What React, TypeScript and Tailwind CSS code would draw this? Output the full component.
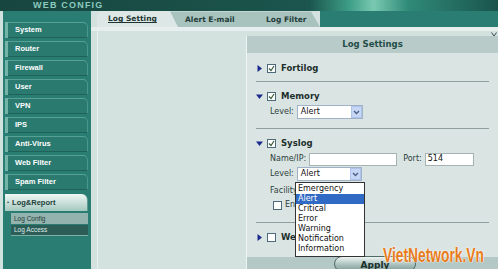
import React from 'react';

const menu = ['System', 'Router', 'Firewall', 'User', 'VPN', 'IPS', 'Anti-Virus', 'Web Filter', 'Spam Filter'];
const levels = ['Emergency', 'Alert', 'Critical', 'Error', 'Warning', 'Notification', 'Information'];

const Tri: React.FC<{ open?: boolean }> = ({ open }) => (
    <svg width="7" height="7" viewBox="0 0 7 7" className="shrink-0">
        {open ? <polygon points="0,1.5 7,1.5 3.5,6" fill="#1b2a8c" /> : <polygon points="1.5,0 6,3.5 1.5,7" fill="#1b2a8c" />}
    </svg>
);

const Check: React.FC<{ on?: boolean }> = ({ on }) => (
    <div className="w-[9px] h-[9px] shrink-0 bg-white border border-[#4d6a7c] flex items-center justify-center">
        {on && (
            <svg width="7" height="7" viewBox="0 0 7 7">
                <polyline points="1,3.5 3,5.5 6,1" fill="none" stroke="#3a5a3a" strokeWidth="1.2" />
            </svg>
        )}
    </div>
);

const Select: React.FC<{ w: string; value: string }> = ({ w, value }) => (
    <div className={`${w} h-[14px] bg-white border border-[#9fb2c8] flex items-center justify-between`}>
        <span className="pl-[3px] text-[8px] text-[#111]">{value}</span>
        <div className="w-[11px] h-[12px] bg-[#c6d6f5] border border-[#b0c3ea] flex items-center justify-center">
            <svg width="7" height="5" viewBox="0 0 7 5">
                <polyline points="1,1 3.5,3.5 6,1" fill="none" stroke="#4d6185" strokeWidth="1.4" />
            </svg>
        </div>
    </div>
);

const Sep = () => <div className="mx-[9px] h-px bg-[#8f9f9d] shrink-0" />;

const App: React.FC = () => {
    return (
        <div className="w-[498px] h-[269px] overflow-hidden relative flex flex-col bg-[#2a7d73] font-['DejaVu_Sans',sans-serif]">
            {/* top strip */}
            <div className="h-[11px] shrink-0 bg-[linear-gradient(90deg,#17463f_0%,#1b554d_62%,#3c9c86_70%,#79c9b0_75%,#2f8a78_82%,#1a544c_100%)]">
                <div className="pl-[33px] text-[9px] leading-[10px] font-bold tracking-[1.2px] text-[#8ccabf] font-['Liberation_Sans',sans-serif]">
                    WEB CONFIG
                </div>
            </div>

            <div className="flex flex-1">
                {/* sidebar */}
                <div className="w-[91px] flex shrink-0">
                    <div className="w-[3px] bg-[#cfe2dd]" />
                    <div className="flex-1 flex flex-col pt-[11px] pl-[2px] pr-[3px] gap-[3px] font-['Liberation_Sans',sans-serif]">
                        {menu.map((m) => (
                            <div key={m} className="h-[16px] flex">
                                <div className="w-[3px] bg-[#74b3a8]" />
                                <div className="flex-1 flex items-center pl-[7px] bg-[#2a7a70] border-t border-r border-b border-t-[#56a095] border-r-[#4a978c] border-b-[#1f6259] rounded-tr-[5px] text-white text-[7.5px] font-bold">
                                    {m}
                                </div>
                            </div>
                        ))}
                        <div className="h-[17px] mt-[1px] flex items-center bg-[linear-gradient(180deg,#eef7f3,#a6c9c0)] rounded-tr-[6px] border-r border-[#5f9b91]">
                            <span className="pl-[2px] pr-[3px] text-[6px] text-[#2c4f4a]">•</span>
                            <span className="text-[7.5px] font-bold text-[#1e3f3a]">Log&amp;Report</span>
                        </div>
                        <div className="-mt-[1px] ml-[6px] flex flex-col">
                            <div className="h-[11px] flex items-center pl-[3px] bg-[#93b4ae] text-[6.5px] text-[#1f3a37]">Log Config</div>
                            <div className="h-[11px] mt-[1px] flex items-center pl-[3px] bg-[#2c5d57] text-[6.5px] text-[#dcece8] border-b border-[#7fb0a8]">Log Access</div>
                        </div>
                    </div>
                </div>

                {/* main */}
                <div className="flex-1 flex flex-col bg-[#d4e2df]">
                    {/* tabs */}
                    <div className="h-[16px] flex shrink-0">
                        <div className="w-[6px] bg-[#d4e2df]" />
                        <div className="relative z-20 w-[81px] h-full bg-[#dde8e6] rounded-tl-[5px] [clip-path:polygon(0_0,90%_0,100%_100%,0_100%)] flex items-center pl-[11px]">
                            <span className="text-[7.5px] font-bold text-[#1c3532] underline">Log Setting</span>
                        </div>
                        <div className="relative z-10 -ml-[8px] w-[82px] h-full bg-[#a8c2be] [clip-path:polygon(0_0,90%_0,100%_100%,0_100%)] flex items-center pl-[15px] border-t border-[#c3d6d3]">
                            <span className="text-[7.5px] font-bold text-[#223c39]">Alert E-mail</span>
                        </div>
                        <div className="-ml-[9px] w-[77px] h-full bg-[#a8c2be] [clip-path:polygon(0_0,88%_0,100%_100%,0_100%)] flex items-center pl-[22px] border-l border-[#c9dbd8] border-t border-t-[#c3d6d3]">
                            <span className="text-[7.5px] font-bold text-[#223c39]">Log Filter</span>
                        </div>
                        <div className="flex-1 bg-[#2a7d73]" />
                    </div>

                    {/* content */}
                    <div className="flex-1 flex flex-col border-t-[4px] border-[#e6efed]">
                        <div className="flex-1 flex ml-[6px] border-l border-[#e9f1ef] pt-[5px] pl-[148px]">
                            <div className="flex-1 flex flex-col border-l border-[#eef4f3]">
                                <div className="h-[17px] shrink-0 bg-[#b8cbc8] flex items-center justify-center text-[8.5px] font-bold text-[#234d48]">
                                    Log Settings
                                </div>
                                <div className="flex-1 flex flex-col bg-[#dae5e3] text-[8px] text-[#2c3d3b]">
                                    {/* fortilog */}
                                    <div className="h-[28px] pt-[8px] pl-[9px] shrink-0">
                                        <div className="h-[14px] flex items-center">
                                            <Tri />
                                            <div className="ml-[4px]"><Check on /></div>
                                            <span className="ml-[5px] text-[8.5px] font-bold text-[#1d2f2d]">Fortilog</span>
                                        </div>
                                    </div>
                                    <Sep />
                                    {/* memory */}
                                    <div className="h-[46px] pt-[7px] pl-[9px] shrink-0 flex flex-col gap-[2px]">
                                        <div className="h-[14px] flex items-center">
                                            <Tri open />
                                            <div className="ml-[4px]"><Check on /></div>
                                            <span className="ml-[5px] text-[8.5px] font-bold text-[#1d2f2d]">Memory</span>
                                        </div>
                                        <div className="h-[14px] flex items-center pl-[14px] gap-[3px]">
                                            <span>Level:</span>
                                            <Select w="w-[66px]" value="Alert" />
                                        </div>
                                    </div>
                                    <Sep />
                                    {/* syslog */}
                                    <div className="h-[93px] pt-[7px] pl-[9px] shrink-0 flex flex-col">
                                        <div className="h-[14px] flex items-center">
                                            <Tri open />
                                            <div className="ml-[4px]"><Check on /></div>
                                            <span className="ml-[5px] text-[8.5px] font-bold text-[#1d2f2d]">Syslog</span>
                                        </div>
                                        <div className="h-[14px] mt-[2px] flex items-center pl-[14px]">
                                            <span>Name/IP:</span>
                                            <div className="ml-[3px] w-[88px] h-[13px] bg-white border border-[#a5b4b2]" />
                                            <span className="ml-[6px]">Port:</span>
                                            <div className="ml-[3px] w-[49px] h-[13px] bg-white border border-[#a5b4b2] flex items-center pl-[2px] text-[#111]">514</div>
                                        </div>
                                        <div className="h-[14px] mt-[1px] flex items-center pl-[14px] gap-[3px]">
                                            <span>Level:</span>
                                            <Select w="w-[65px]" value="Alert" />
                                        </div>
                                        {/* rows partly hidden behind the open list */}
                                        <div className="h-[14px] mt-[3px] flex items-center pl-[14px]">
                                            <span className="w-[26px] overflow-hidden whitespace-nowrap">Facility:</span>
                                        </div>
                                        <div className="h-[14px] flex items-center pl-[17px] gap-[3px]">
                                            <Check />
                                            <span className="w-[11px] overflow-hidden whitespace-nowrap">Enable CSV Format</span>
                                        </div>
                                    </div>
                                    <Sep />
                                    {/* webtrends */}
                                    <div className="flex-1 pt-[7px] pl-[9px]">
                                        <div className="h-[14px] flex items-center">
                                            <Tri />
                                            <div className="ml-[4px]"><Check /></div>
                                            <span className="ml-[5px] w-[15px] overflow-hidden whitespace-nowrap text-[8.5px] font-bold text-[#1d2f2d]">WebTrends</span>
                                        </div>
                                    </div>
                                    {/* bottom bar */}
                                    <div className="h-[12px] shrink-0 bg-[#b4c8c5] flex pl-[87px]">
                                        <div className="w-[82px] h-[16px] -mt-[1px] rounded-full border border-[#4e6a66] bg-[linear-gradient(180deg,#eef4f2,#a9c0bc_55%,#7f9c97)] flex justify-center pt-[2px] text-[9px] font-bold text-[#18302c]">
                                            Apply
                                        </div>
                                    </div>
                                </div>
                            </div>
                        </div>
                    </div>
                </div>
            </div>

            {/* scroll arrow glimpse */}
            <svg width="6" height="5" viewBox="0 0 6 5" className="absolute left-[491px] top-[32px]">
                <polyline points="0.5,0.5 3,4 5.5,0.5" fill="none" stroke="#3b4a48" strokeWidth="1" />
            </svg>

            {/* open dropdown list */}
            <div className="absolute left-[295px] top-[182px] w-[70px] h-[75px] bg-white border border-[#333] pt-[1px] z-30 flex flex-col text-[8px] text-[#111]">
                {levels.map((l) => (
                    <div key={l} className={`h-[10px] leading-[10px] pl-[2px] ${l === 'Alert' ? 'bg-[#316ac5] text-white' : ''}`}>
                        {l}
                    </div>
                ))}
            </div>

            {/* watermark */}
            <div className="absolute left-[383px] top-[244px] z-40 origin-left scale-x-[0.69] text-[20px] leading-[22px] font-bold text-[#e67c1c] font-['Liberation_Sans',sans-serif] whitespace-nowrap [text-shadow:0_0_2px_#fff,0_0_1px_#fff,0_0_1px_#fde6c8]">
                VietNetwork.Vn
            </div>
        </div>
    );
};

export default App;
